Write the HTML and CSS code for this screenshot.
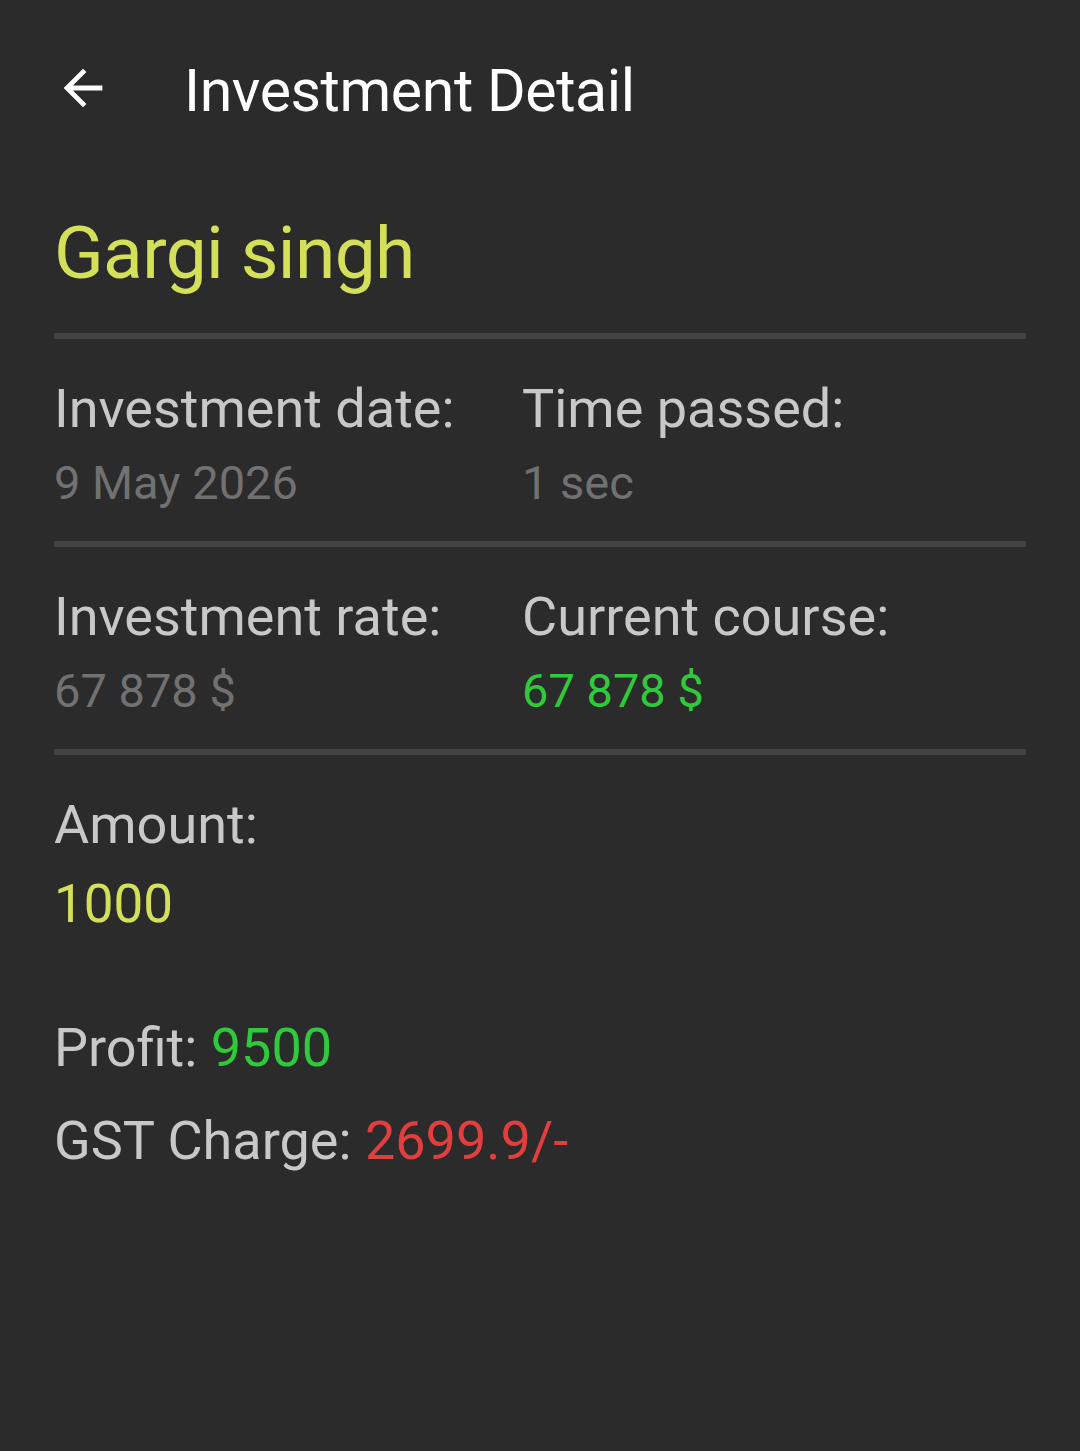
FILE: index.html
```html
<!DOCTYPE html>
<html lang="en">
<head>
<meta charset="utf-8">
<title>Investment Detail</title>
<link rel="stylesheet" href="styles.css">
</head>
<body>
<div class="screen">
  <header class="toolbar">
    <svg class="back" viewBox="0 0 24 24" aria-hidden="true"><path d="M20 11H7.83l5.59-5.59L12 4l-8 8 8 8 1.41-1.41L7.83 13H20v-2z"/></svg>
    <h1 class="title">Investment Detail</h1>
  </header>
  <main class="content">
    <div class="name">Gargi singh</div>
    <div class="divider"></div>
    <div class="row">
      <div class="cell">
        <div class="label">Investment date:</div>
        <div class="value">9 May 2026</div>
      </div>
      <div class="cell">
        <div class="label">Time passed:</div>
        <div class="value">1 sec</div>
      </div>
    </div>
    <div class="divider"></div>
    <div class="row">
      <div class="cell">
        <div class="label">Investment rate:</div>
        <div class="value">67 878 $</div>
      </div>
      <div class="cell">
        <div class="label">Current course:</div>
        <div class="value green">67 878 $</div>
      </div>
    </div>
    <div class="divider"></div>
    <div class="amount">
      <div class="label">Amount:</div>
      <div class="amount-value">1000</div>
    </div>
    <div class="profit label">Profit: <span class="green">9500</span></div>
    <div class="gst label">GST Charge: <span class="red">2699.9/-</span></div>
  </main>
</div>
</body>
</html>
```

FILE: styles.css
```css
html, body {
  margin: 0;
  padding: 0;
  background: #2b2b2b;
}
body {
  font-family: Roboto, "Noto Sans", "Liberation Sans", sans-serif;
  width: 1080px;
  min-height: 1451px;
}
.screen {
  display: flex;
  flex-direction: column;
}
.toolbar {
  display: flex;
  align-items: flex-start;
  padding-top: 56px;
  height: 70px;
}
.back {
  width: 58px;
  height: 58px;
  fill: #ffffff;
  margin-left: 54px;
  margin-top: 3px;
  flex: none;
}
.title {
  margin: 0 0 0 72px;
  font-size: 59px;
  line-height: 70px;
  letter-spacing: -0.4px;
  font-weight: 400;
  color: #ffffff;
}
.content {
  display: flex;
  flex-direction: column;
  padding: 0 54px;
}
.name {
  margin-top: 84px;
  font-size: 73px;
  line-height: 87px;
  letter-spacing: -0.6px;
  color: #d4e05a;
  margin-bottom: 36px;
}
.divider {
  height: 6px;
  background: #424242;
}
.row {
  display: grid;
  grid-template-columns: 468px 1fr;
  padding: 38px 0 31.5px;
}
.cell {
  display: flex;
  flex-direction: column;
  gap: 14.5px;
}
.label {
  font-size: 54px;
  line-height: 63px;
  color: #c8c8c8;
}
.value {
  font-size: 47px;
  line-height: 55px;
  color: #717171;
}
.green {
  color: #30c93c;
}
.red {
  color: #e23e3e;
}
.amount {
  display: flex;
  flex-direction: column;
  gap: 17px;
  padding-top: 38px;
}
.amount-value {
  font-size: 53px;
  line-height: 62px;
  color: #d4e05a;
}
.profit {
  margin-top: 81px;
}
.gst {
  margin-top: 30px;
}
```
